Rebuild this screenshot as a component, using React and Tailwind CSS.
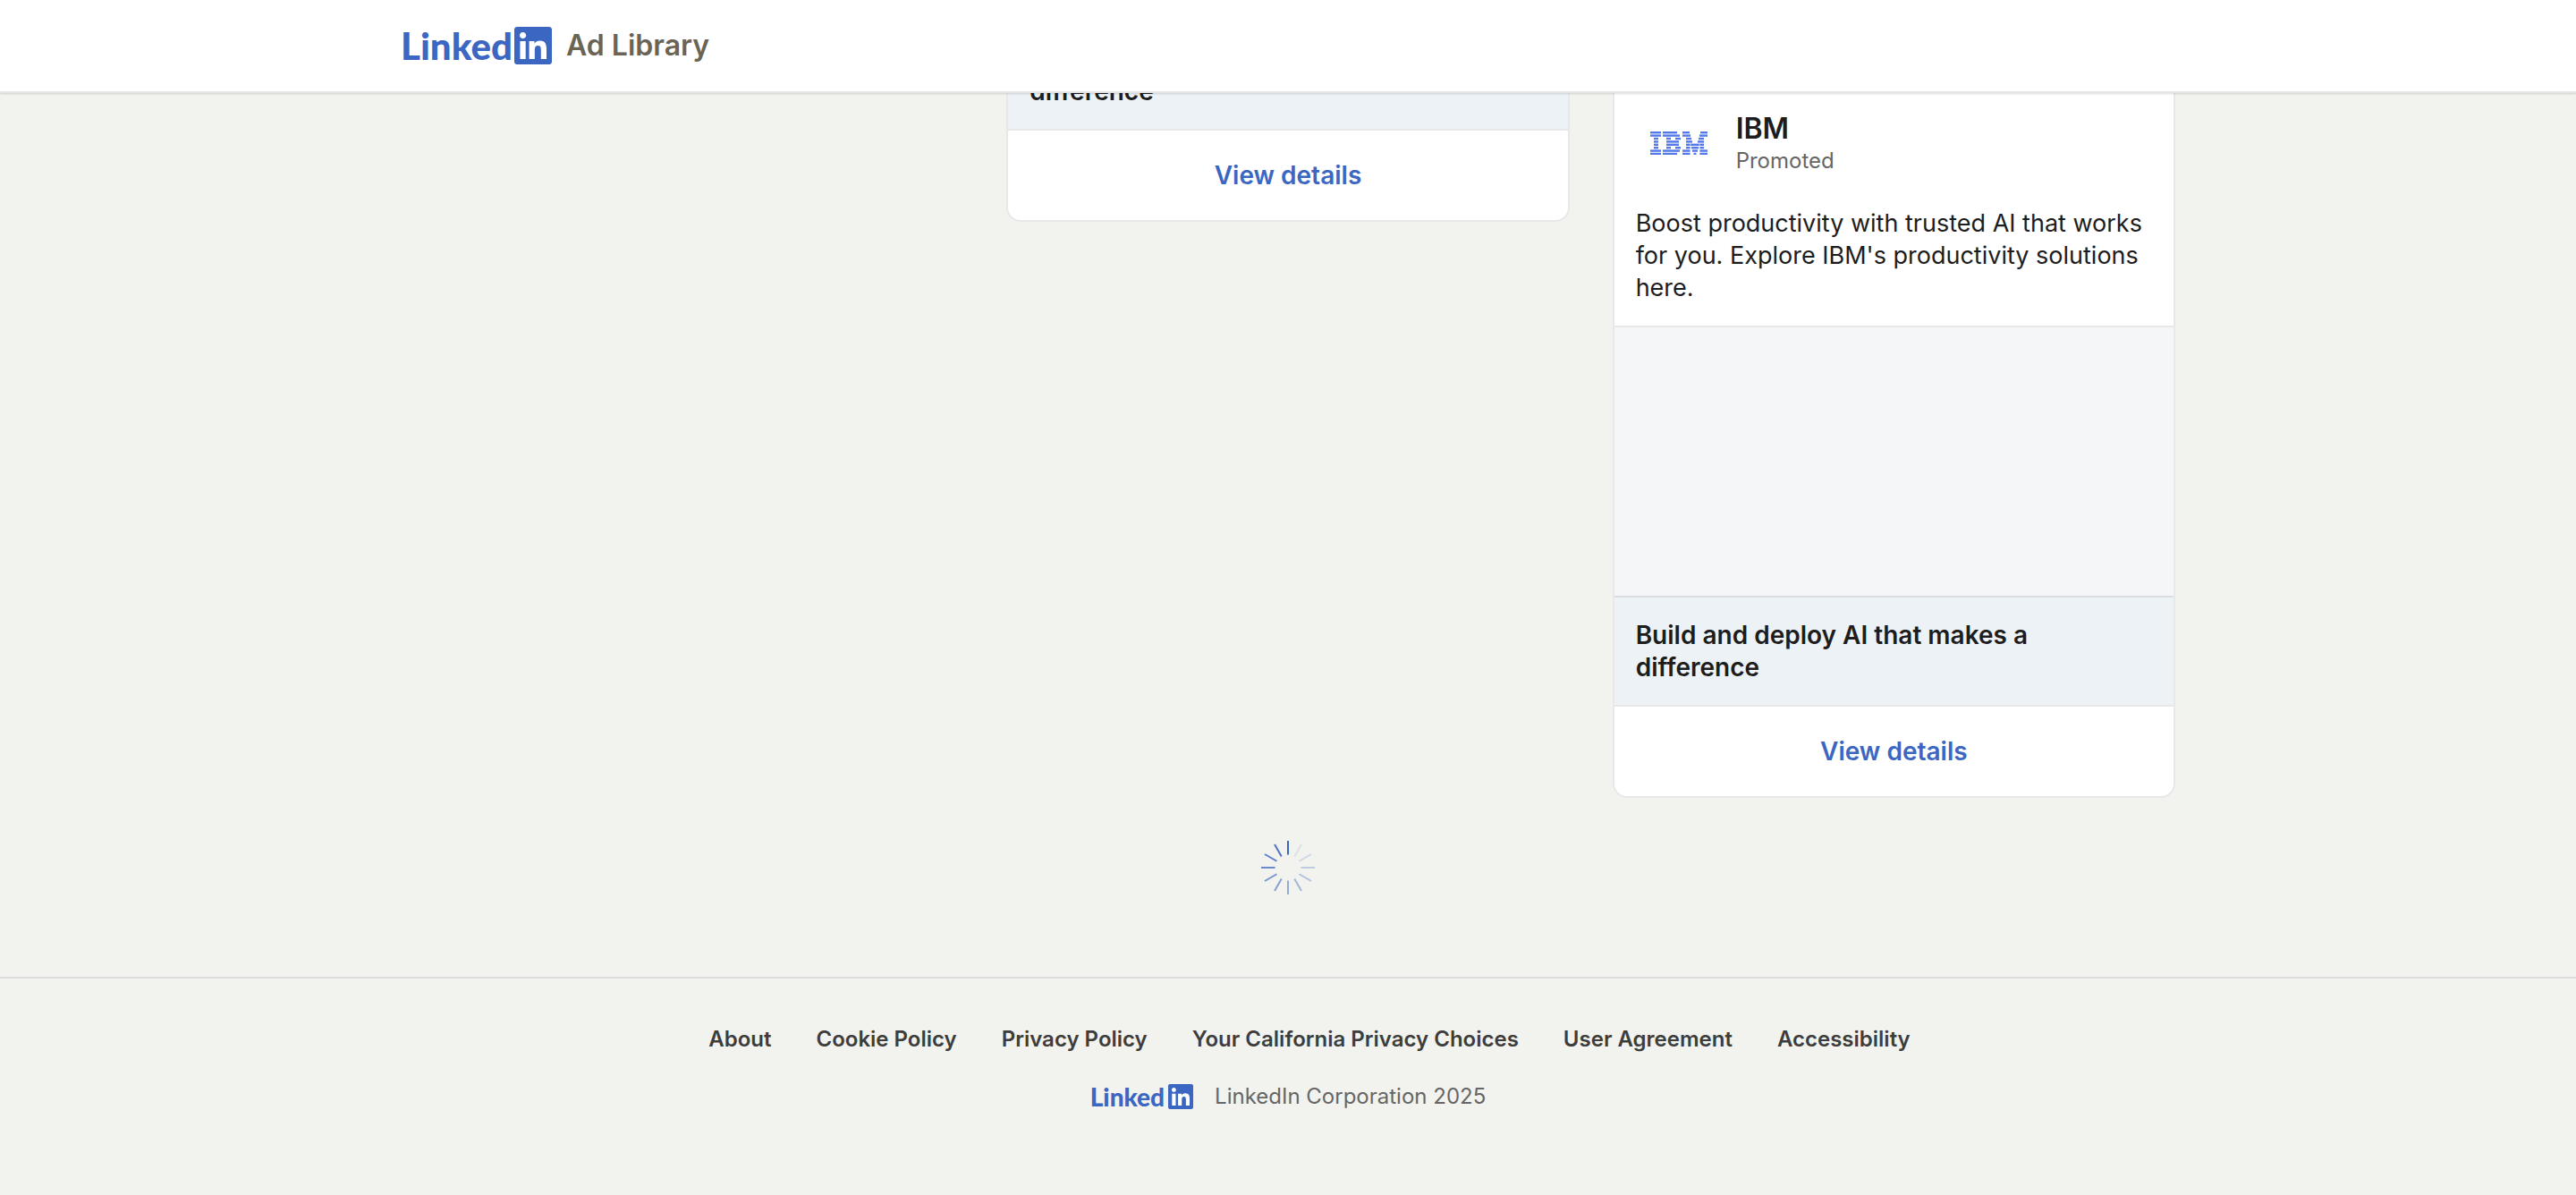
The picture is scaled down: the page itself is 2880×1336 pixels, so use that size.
import { FaLinkedin } from "react-icons/fa";

const IBM_ROWS = [
  [[0, 12], [14, 30], [36, 44], [56, 64]],
  [[0, 12], [14, 33], [36, 45], [55, 64]],
  [[4, 9], [18, 23], [28, 34], [40, 46], [54, 60]],
  [[4, 9], [18, 32], [40, 47], [53, 60]],
  [[4, 9], [18, 32], [40, 44.6], [45.2, 54.8], [55.4, 60]],
  [[4, 9], [18, 23], [28, 34], [40, 44.6], [46, 54], [55.4, 60]],
  [[0, 12], [14, 33], [36, 44.6], [47, 53], [55.4, 64]],
  [[0, 12], [14, 30], [36, 44.6], [48.6, 51.4], [55.4, 64]],
];

function IbmLogo() {
  return (
    <svg viewBox="0 0 64 26" className="h-[26px] w-16" role="img" aria-label="IBM logo" fill="#5478e8">
      {IBM_ROWS.map((row, y) =>
        row.map(([from, to]) => (
          <rect key={`${y}-${from}`} x={from} y={y * 3.4} width={to - from} height="2.4" />
        ))
      )}
    </svg>
  );
}

function Spinner() {
  return (
    <svg viewBox="0 0 60 60" className="size-[60px]" role="img" aria-label="Loading">
      {Array.from({ length: 12 }, (_, i) => (
        <line
          key={i}
          x1="30"
          y1="0"
          x2="30"
          y2="15.5"
          stroke="#3b66c2"
          strokeWidth="2"
          opacity={i === 0 ? 1 : 0.04 + i * 0.078}
          transform={`rotate(${i * 30} 30 30)`}
        />
      ))}
    </svg>
  );
}

function Wordmark({ small }) {
  return (
    <span className={`flex items-center font-[Lato,sans-serif] font-black text-[#3b66c2] ${small ? "gap-1 text-[28px] leading-7" : "gap-0.5 text-[42px] leading-[42px]"}`}>
      Linked
      <span className="bg-white">
        <FaLinkedin viewBox="0 32 448 448" className={small ? "size-7" : "size-[42px]"} aria-label="in" />
      </span>
    </span>
  );
}

function AdCard({ className, children }) {
  return (
    <article className={`overflow-hidden rounded-b-2xl border-2 border-[#e8e8e8] bg-white ${className}`}>
      {children}
      <h3 className="border-b-2 border-[#e8e8e8] bg-[#edf2f7] p-6 text-[28px] leading-9 font-semibold">
        Build and deploy AI that makes a difference
      </h3>
      <button type="button" className="block h-[100px] w-full text-[28px] leading-9 font-semibold text-[#3b66c2]">
        View details
      </button>
    </article>
  );
}

function AdBody() {
  return (
    <>
      <div className="flex items-center gap-4 px-6 pt-4">
        <div className="flex size-24 items-center justify-center">
          <IbmLogo />
        </div>
        <div>
          <h2 className="text-[32px] leading-10 font-semibold">IBM</h2>
          <p className="text-2xl leading-8 text-[#666666]">Promoted</p>
        </div>
      </div>
      <p className="p-6 text-[27px] leading-9">
        Boost productivity with trusted AI that works for you. Explore IBM's productivity solutions here.
      </p>
      <div className="h-[304px] border-y-2 border-t-[#e8e8e8] border-b-[#d9dde3] bg-[#f5f6f8]" />
    </>
  );
}

const LINKS = ["About", "Cookie Policy", "Privacy Policy", "Your California Privacy Choices", "User Agreement", "Accessibility"];

export default function App() {
  return (
    <div className="min-h-screen bg-[#f2f3ee] font-[Inter,sans-serif] text-[#1d1d1d]">
      <header className="relative z-10 border-b-2 border-[#e6e6e6] bg-white shadow-[0_1px_2px_rgba(0,0,0,0.15)]">
        <a href="#home" className="mx-auto flex h-[102px] max-w-[1984px] items-center gap-4">
          <Wordmark />
          <span className="text-[32px] leading-10 font-semibold text-[#6b6455]">Ad Library</span>
        </a>
      </header>
      <main>
        <div className="mx-auto -mt-[10px] grid max-w-[1984px] grid-cols-3 items-start gap-12">
          <AdCard className="col-start-2 -mt-[72px]" />
          <AdCard className="">
            <AdBody />
          </AdCard>
        </div>
        <div className="flex justify-center pt-12 pb-[92px]">
          <Spinner />
        </div>
      </main>
      <footer className="flex flex-col items-center border-t-2 border-[#dcdcdc] pt-12">
        <nav className="flex gap-[50px] pl-12 text-2xl leading-10 font-semibold text-[#3d3d3d]">
          {LINKS.map((label) => (
            <a key={label} href="#policy">{label}</a>
          ))}
        </nav>
        <div className="flex items-center gap-6 pt-6">
          <Wordmark small />
          <p className="text-2xl leading-10 text-[#666666]">LinkedIn Corporation 2025</p>
        </div>
      </footer>
    </div>
  );
}
